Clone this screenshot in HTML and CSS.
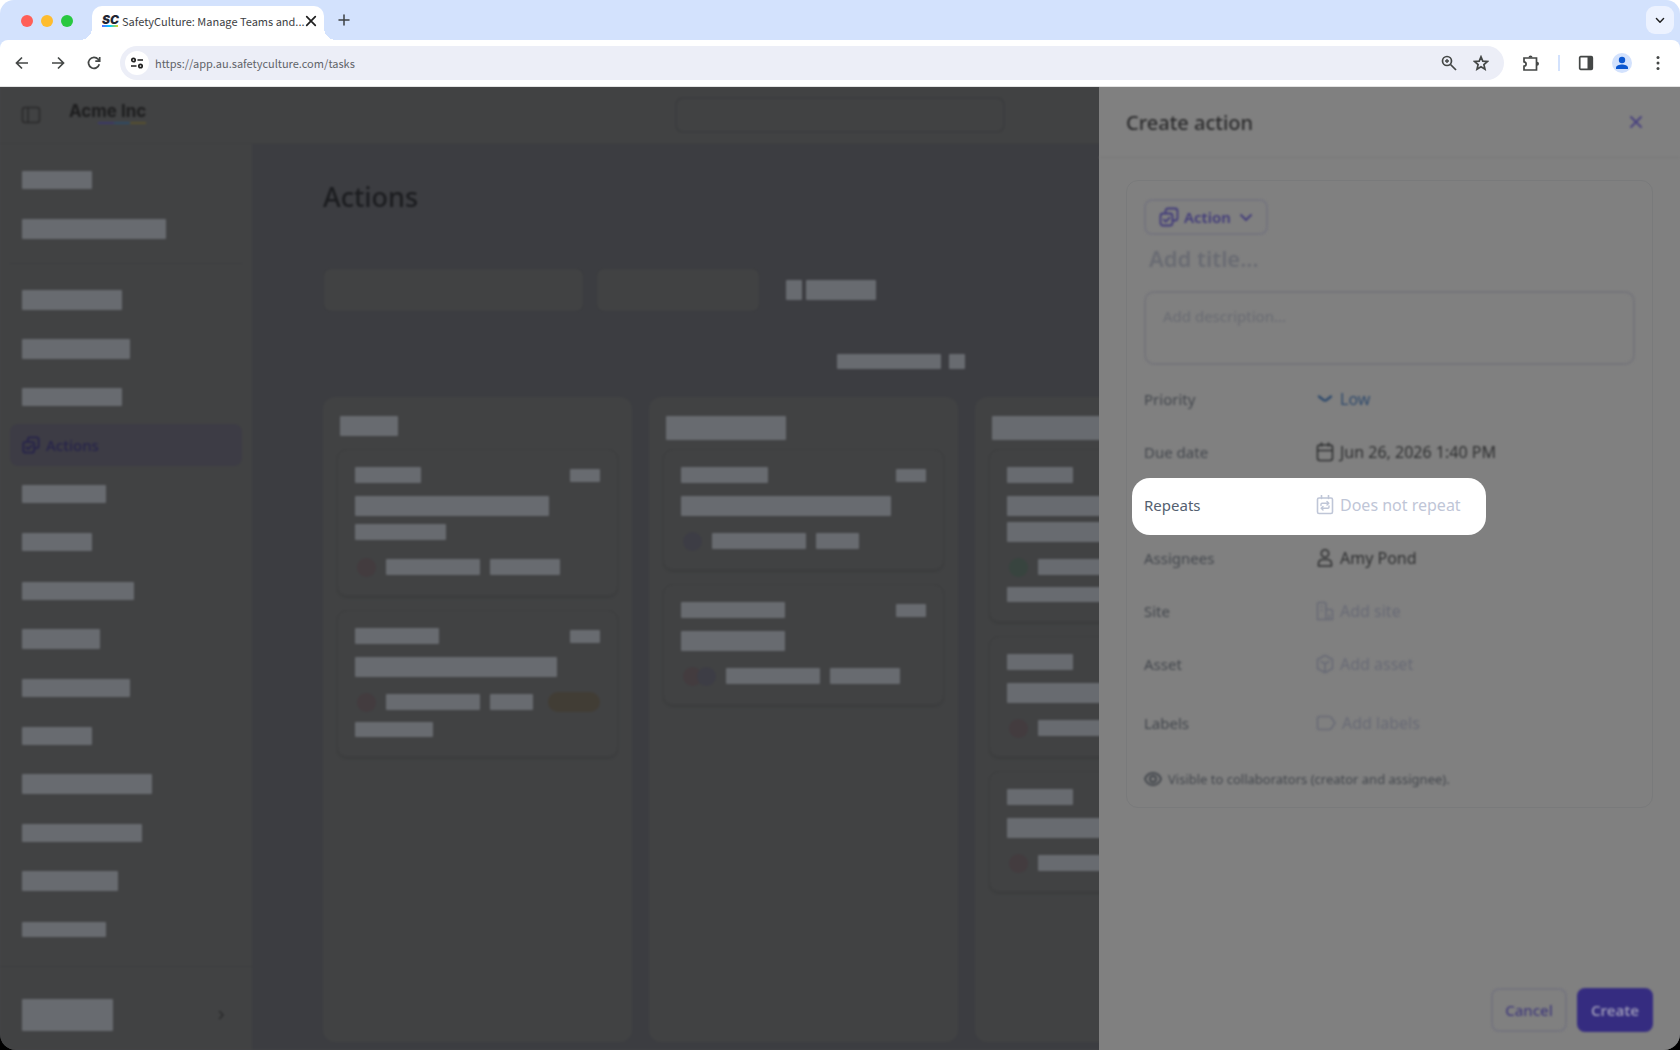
FILE: index.html
```html
<!DOCTYPE html>
<html lang="en">
<head>
    <meta charset="UTF-8">
    <meta name="viewport" content="width=device-width, initial-scale=1.0">
    <title>SafetyCulture: Manage Teams and...</title>
    <link rel="stylesheet" href="styles.css">
</head>
<body>

<svg class="sprite" aria-hidden="true">
    <symbol id="icon-action" viewBox="0 0 20 20">
        <path d="M6.500 6V4a2.500 2.500 0 0 1 2.500-2.500h7A2.500 2.500 0 0 1 18.500 4v7a2.500 2.500 0 0 1-2.500 2.500h-2"/>
        <rect x="1.500" y="6.500" width="12" height="12" rx="2.500"/>
        <path d="M4.800 12.600l2 2 3.800-4"/>
    </symbol>
    <symbol id="icon-close" viewBox="0 0 14 14">
        <path d="M2 2l10 10M12 2L2 12"/>
    </symbol>
    <symbol id="icon-chevron" viewBox="0 0 14 14">
        <path d="M2 5l5 5 5-5"/>
    </symbol>
</svg>

<header class="browser">
    <div class="tab-strip">
        <div class="lights">
            <span class="light red"></span>
            <span class="light yellow"></span>
            <span class="light lime"></span>
        </div>
        <div class="tab">
            <span class="favicon">SC</span>
            <span class="tab-title">SafetyCulture: Manage Teams and...</span>
            <button class="icon-btn tab-close" aria-label="Close tab">
                <svg width="12" height="12"><use href="#icon-close"/></svg>
            </button>
        </div>
        <button class="icon-btn new-tab" aria-label="New tab">
            <svg width="12" height="12" viewBox="0 0 12 12"><path d="M6 1v10M1 6h10"/></svg>
        </button>
        <button class="icon-btn tab-search" aria-label="Search tabs">
            <svg width="10" height="10"><use href="#icon-chevron"/></svg>
        </button>
    </div>

    <div class="toolbar">
        <div class="history">
            <button class="icon-btn" aria-label="Back">
                <svg width="16" height="16" viewBox="0 0 16 16"><path d="M14 8H3M8 2.500L2.500 8 8 13.500"/></svg>
            </button>
            <button class="icon-btn" aria-label="Forward">
                <svg width="16" height="16" viewBox="0 0 16 16"><path d="M2 8h11M8 2.500L13.500 8 8 13.500"/></svg>
            </button>
            <button class="icon-btn" aria-label="Reload">
                <svg width="16" height="16" viewBox="0 0 16 16"><path d="M13.300 9.300A5.500 5.500 0 1 1 12.200 4.300L13.500 6M13.700 2v4.200H9.300"/></svg>
            </button>
        </div>
        <div class="address">
            <button class="icon-btn site-info" aria-label="Site information">
                <svg width="14" height="14" viewBox="0 0 14 14"><circle cx="3.500" cy="4" r="1.700"/><path d="M7.500 4H13M1 10h5.500"/><circle cx="10.500" cy="10" r="1.700"/></svg>
            </button>
            <input class="url" type="text" aria-label="Address" value="https://app.au.safetyculture.com/tasks">
            <button class="icon-btn" aria-label="Zoom">
                <svg width="16" height="16" viewBox="0 0 16 16"><circle cx="6" cy="6" r="4.500"/><path d="M9.500 9.500L15 15"/><path class="thin" d="M6 4v4M4 6h4"/></svg>
            </button>
            <button class="icon-btn" aria-label="Bookmark">
                <svg width="16" height="16" viewBox="0 0 16 16"><path d="M8 1.800l1.800 4.300 4.700.4-3.600 3.100 1.100 4.600L8 11.800l-4 2.400 1.100-4.600L1.500 6.500l4.700-.4z"/></svg>
            </button>
        </div>
        <button class="icon-btn" aria-label="Extensions">
            <svg width="18" height="18" viewBox="0 0 18 18"><path d="M2 4h12.500v12H2v-3.800c2.800-.3 2.800-4.100 0-4.400z"/><path class="fill" d="M6.500 3.500a2 2 0 0 1 4 0zM15 7.800a2 2 0 0 1 0 4z"/></svg>
        </button>
        <span class="toolbar-divider"></span>
        <button class="icon-btn" aria-label="Side panel">
            <svg width="16" height="16" viewBox="0 0 16 16"><rect x="1.700" y="1.700" width="12.600" height="12.600" rx="1"/><path class="fill" d="M9.500 2h5v12h-5z"/></svg>
        </button>
        <button class="icon-btn profile" aria-label="Profile">
            <svg width="14" height="14" viewBox="0 0 14 14"><circle cx="7" cy="4" r="3.200"/><path d="M1 13v-1.500C1 9.500 4.500 8.400 7 8.400s6 1.100 6 3.100V13z"/></svg>
        </button>
        <button class="icon-btn" aria-label="Menu">
            <svg width="16" height="16" viewBox="0 0 16 16"><g class="fill"><circle cx="8" cy="2.500" r="1.500"/><circle cx="8" cy="8" r="1.500"/><circle cx="8" cy="13.500" r="1.500"/></g></svg>
        </button>
    </div>
</header>

<div class="app">
    <div class="workspace">
        <header class="topbar">
            <div class="brand">
                <button class="icon-btn" aria-label="Toggle sidebar">
                    <svg width="20" height="18" viewBox="0 0 20 18"><rect x="1.500" y="1.500" width="17" height="15" rx="2.500"/><path d="M7 2v14"/></svg>
                </button>
                <span class="logo">Acme Inc</span>
            </div>
            <input class="search" type="search" aria-label="Search">
        </header>

        <nav class="sidebar">
            <ul class="menu-top">
                <li><span class="bar w70 h18"></span></li>
                <li><span class="bar w144 h20"></span></li>
            </ul>
            <ul class="menu">
                <li><span class="bar w100 h20"></span></li>
                <li><span class="bar w108 h20"></span></li>
                <li><span class="bar w100 h18"></span></li>
                <li><a class="current" href="#"><svg width="18" height="18"><use href="#icon-action"/></svg>Actions</a></li>
                <li><span class="bar w84 h18"></span></li>
                <li><span class="bar w70 h18"></span></li>
                <li><span class="bar w112 h18"></span></li>
                <li><span class="bar w78 h20"></span></li>
                <li><span class="bar w108 h18"></span></li>
                <li><span class="bar w70 h18"></span></li>
                <li><span class="bar w130 h20"></span></li>
                <li><span class="bar w120 h18"></span></li>
                <li><span class="bar w96 h20"></span></li>
                <li><span class="bar w84 h15"></span></li>
            </ul>
            <div class="account">
                <span class="bar w91 h32"></span>
                <svg class="turn" width="10" height="10"><use href="#icon-chevron"/></svg>
            </div>
        </nav>

        <main class="content">
            <h1>Actions</h1>
            <div class="filters">
                <input class="filter wide" type="text" aria-label="Search actions">
                <input class="filter" type="text" aria-label="Filter">
                <span class="bar w16 h20"></span>
                <span class="bar w70 h20"></span>
            </div>
            <div class="sorting">
                <span class="bar w104 h15"></span>
                <span class="bar w16 h15"></span>
            </div>

            <div class="board">
                <section class="column">
                    <div class="column-head"><span class="bar w58 h20"></span></div>
                    <article class="card">
                        <div class="card-top"><span class="bar w66 h16"></span><span class="bar w30 h13"></span></div>
                        <div class="line"><span class="bar w194 h20"></span></div>
                        <div class="line"><span class="bar w91 h16"></span></div>
                        <div class="meta"><span class="dot rose"></span><span class="bar w94 h16"></span><span class="bar w70 h16"></span></div>
                    </article>
                    <article class="card">
                        <div class="card-top"><span class="bar w84 h16"></span><span class="bar w30 h13"></span></div>
                        <div class="line"><span class="bar w202 h20"></span></div>
                        <div class="meta"><span class="dot rose"></span><span class="bar w94 h16"></span><span class="bar w43 h16"></span><span class="pill"></span></div>
                        <div class="extra"><span class="bar w78 h15"></span></div>
                    </article>
                </section>

                <section class="column">
                    <div class="column-head"><span class="bar w120 h24"></span></div>
                    <article class="card">
                        <div class="card-top"><span class="bar w87 h16"></span><span class="bar w30 h13"></span></div>
                        <div class="line"><span class="bar w210 h20"></span></div>
                        <div class="meta"><span class="dot indigo"></span><span class="bar w94 h16"></span><span class="bar w43 h16"></span></div>
                    </article>
                    <article class="card">
                        <div class="card-top"><span class="bar w104 h16"></span><span class="bar w30 h13"></span></div>
                        <div class="line"><span class="bar w104 h20"></span></div>
                        <div class="meta"><span class="dot rose"></span><span class="dot indigo second"></span><span class="bar w94 h16"></span><span class="bar w70 h16"></span></div>
                    </article>
                </section>

                <section class="column">
                    <div class="column-head"><span class="bar w144 h24"></span></div>
                    <article class="card">
                        <div class="card-top"><span class="bar w66 h16"></span><span class="bar w30 h13"></span></div>
                        <div class="line"><span class="bar w194 h20"></span></div>
                        <div class="line"><span class="bar w194 h20"></span></div>
                        <div class="meta"><span class="dot green"></span><span class="bar w94 h16"></span><span class="bar w70 h16"></span></div>
                        <div class="extra"><span class="bar w144 h15"></span></div>
                    </article>
                    <article class="card">
                        <div class="card-top"><span class="bar w66 h16"></span><span class="bar w30 h13"></span></div>
                        <div class="line"><span class="bar w194 h20"></span></div>
                        <div class="meta"><span class="dot rose"></span><span class="bar w94 h16"></span><span class="bar w70 h16"></span></div>
                    </article>
                    <article class="card">
                        <div class="card-top"><span class="bar w66 h16"></span><span class="bar w30 h13"></span></div>
                        <div class="line"><span class="bar w194 h20"></span></div>
                        <div class="meta"><span class="dot rose"></span><span class="bar w94 h16"></span><span class="bar w70 h16"></span></div>
                    </article>
                </section>
            </div>
        </main>
    </div>

    <aside class="drawer">
        <div class="drawer-head">
            <h2>Create action</h2>
            <button class="icon-btn close" aria-label="Close">
                <svg width="14" height="14"><use href="#icon-close"/></svg>
            </button>
        </div>

        <form class="form">
            <button type="button" class="btn type-btn">
                <svg width="20" height="20"><use href="#icon-action"/></svg>
                Action
                <svg class="type-arrow" width="14" height="14"><use href="#icon-chevron"/></svg>
            </button>
            <input class="title-input" type="text" aria-label="Title" placeholder="Add title...">
            <textarea class="description" aria-label="Description" placeholder="Add description..."></textarea>

            <div class="row">
                <label for="priority">Priority</label>
                <button type="button" id="priority" class="value low">
                    <svg width="18" height="20" viewBox="0 0 18 20"><path class="bold" d="M3 7.500l4.500 3.500q1.500 1 3 0L15 7.500"/></svg>
                    Low
                </button>
            </div>
            <div class="row">
                <label for="due">Due date</label>
                <button type="button" id="due" class="value filled">
                    <svg width="18" height="20" viewBox="0 0 18 20"><rect x="1.500" y="3" width="15" height="15.500" rx="2.500"/><path d="M2 8.500h14M5.500 1v3M12.500 1v3"/></svg>
                    Jun 26, 2026 1:40 PM
                </button>
            </div>
            <div class="row spotlight">
                <label for="repeats">Repeats</label>
                <button type="button" id="repeats" class="value">
                    <svg width="18" height="20" viewBox="0 0 18 20"><rect x="1.500" y="3" width="15" height="15.500" rx="1.500"/><path d="M5.500 .5v3M12.500 .5v3"/><path class="thin" d="M5 10.500V9.300a1 1 0 0 1 1-1h6.500M11 6.500l1.800 1.800L11 10.100M13 11v1.200a1 1 0 0 1-1 1H5.500M7 11.400l-1.800 1.800L7 15"/></svg>
                    Does not repeat
                </button>
            </div>
            <div class="row">
                <label for="assignees">Assignees</label>
                <button type="button" id="assignees" class="value filled">
                    <svg width="18" height="20" viewBox="0 0 18 20"><circle cx="9" cy="5.500" r="3.700"/><path d="M6.500 11.500h5a4.500 4.500 0 0 1 4 4.500v2h-13v-2a4.500 4.500 0 0 1 4-4.500z"/></svg>
                    Amy Pond
                </button>
            </div>
            <div class="row">
                <label for="site">Site</label>
                <button type="button" id="site" class="value">
                    <svg width="18" height="20" viewBox="0 0 18 20"><path d="M10 18.500H1.500V3a1.500 1.500 0 0 1 1.500-1.500h5.500A1.500 1.500 0 0 1 10 3zM10 8.500h5A1.500 1.500 0 0 1 16.500 10v8.500H10M13.200 14v4"/><path class="thin" d="M5.700 5v1M5.700 9v1"/></svg>
                    Add site
                </button>
            </div>
            <div class="row">
                <label for="asset">Asset</label>
                <button type="button" id="asset" class="value">
                    <svg width="18" height="20" viewBox="0 0 18 20"><path d="M9 1.200l7.500 4.300v9L9 18.800 1.500 14.500v-9zM5 7.500l4 2.300 4-2.300M9 10v8.500"/></svg>
                    Add asset
                </button>
            </div>
            <div class="row tall">
                <label for="labels">Labels</label>
                <button type="button" id="labels" class="value">
                    <svg width="20" height="20" viewBox="0 0 20 20"><path d="M3.500 3.500h9.500a3 3 0 0 1 2.400 1.200L19 10l-3.600 5.300a3 3 0 0 1-2.400 1.200H3.500a2 2 0 0 1-2-2v-9a2 2 0 0 1 2-2z"/></svg>
                    Add labels
                </button>
            </div>
            <p class="visibility">
                <svg width="18" height="18" viewBox="0 0 18 18"><path d="M1 9c1.500-4 4.500-6 8-6s6.500 2 8 6c-1.500 4-4.500 6-8 6s-6.500-2-8-6z"/><circle cx="9" cy="9" r="3"/></svg>
                Visible to collaborators (creator and assignee).
            </p>
        </form>

        <div class="drawer-foot">
            <button class="btn cancel">Cancel</button>
            <button class="btn create">Create</button>
        </div>
    </aside>
</div>

</body>
</html>
```
FILE: styles.css
```css
* {
    box-sizing: border-box;
}
body {
    margin: 0;
    height: 100vh;
    display: flex;
    flex-direction: column;
    background: linear-gradient(#fff 50%, #000 50%); /* shows behind the rounded window corners */
    font-family: "Noto Sans", sans-serif;
    font-size: 16px;
    overflow: hidden;
}
button, input, textarea {
    font: inherit;
    color: inherit;
    margin: 0;
}
ul {
    list-style: none;
    margin: 0;
    padding: 0;
}
svg {
    display: block;
    flex: none;
    fill: none;
    stroke: currentColor;
    stroke-width: 2;
    stroke-linecap: round;
    stroke-linejoin: round;
}
svg .thin {
    stroke-width: 1.4;
}
svg .bold {
    stroke-width: 2.4;
}
svg .fill {
    fill: currentColor;
    stroke: none;
}
.sprite {
    position: absolute;
    width: 0;
    height: 0;
}
.icon-btn {
    display: flex;
    align-items: center;
    justify-content: center;
    flex: none;
    padding: 0;
    border: none;
    background: none;
    cursor: pointer;
}

/* Browser window */
.browser {
    flex: none;
    background: #d3e2fd;
    border-radius: 14px 14px 0 0;
    font-family: "Noto Sans CJK SC", sans-serif;
    font-size: 11px;
    color: #3c4043;
}
.tab-strip {
    display: flex;
    align-items: flex-start;
    height: 40px;
    padding: 6px 6px 0 21px;
}
.lights {
    display: flex;
    gap: 8px;
    margin: 9px 19px 0 0;
}
.light {
    width: 12px;
    height: 12px;
    border-radius: 50%;
}
.red { background: #ff5f57; }
.yellow { background: #febc2e; }
.lime { background: #28c840; }
.tab {
    position: relative;
    display: flex;
    align-items: center;
    width: 232px;
    height: 34px;
    padding: 0 10px 5px;
    background: #fff;
    border-radius: 10px 10px 0 0;
}
/* curved feet of the active tab */
.tab::before,
.tab::after {
    content: "";
    position: absolute;
    bottom: 0;
    width: 12px;
    height: 12px;
}
.tab::before {
    right: 100%;
    background: radial-gradient(circle at 0 0, transparent 12px, #fff 12px);
}
.tab::after {
    left: 100%;
    background: radial-gradient(circle at 100% 0, transparent 12px, #fff 12px);
}
.favicon {
    width: 16px;
    margin-right: 4px;
    border-bottom: 2px solid;
    border-image: linear-gradient(90deg, #6559ff, #00d1ff, #ffd500) 1;
    font: italic 900 12px/11px Inter, sans-serif;
    color: #1f2533;
}
.tab-title {
    flex: 1;
    white-space: nowrap;
}
.tab-close {
    color: #1f1f1f;
}
.new-tab {
    width: 24px;
    height: 28px;
    margin-left: 8px;
}
.new-tab svg {
    stroke-width: 1.5;
}
.tab-search {
    width: 28px;
    height: 28px;
    margin-left: auto;
    border-radius: 9px;
    background: #ecf2ff;
    color: #1f1f1f;
}
.toolbar {
    display: flex;
    align-items: center;
    gap: 18px;
    height: 47px;
    padding: 0 14px;
    background: #fff;
    border-radius: 8px 8px 0 0;
    border-bottom: 1px solid #e3e3e3;
    color: #444746;
}
.toolbar svg {
    stroke-width: 1.7;
    stroke-linecap: butt;
    stroke-linejoin: miter;
}
.history {
    display: flex;
    gap: 20px;
}
.address {
    display: flex;
    align-items: center;
    flex: 1;
    gap: 16px;
    height: 34px;
    padding: 0 15px 0 5px;
    border-radius: 17px;
    background: #eceef7;
}
.site-info {
    width: 24px;
    height: 24px;
    border-radius: 50%;
    background: #fff;
    color: #1f1f1f;
}
.url {
    flex: 1;
    min-width: 0;
    margin-left: -10px;
    padding: 0;
    border: none;
    outline: none;
    background: none;
    color: #5f6368;
}
.toolbar-divider {
    width: 2px;
    height: 16px;
    background: #d3e2fd;
}
.profile {
    width: 20px;
    height: 20px;
    border-radius: 50%;
    background: #d3e2fd;
    color: #0b57d0;
}
.profile svg {
    fill: currentColor;
    stroke: none;
}

/* Dimmed application */
.app {
    position: relative;
    flex: 1;
    min-height: 0;
    display: flex;
    overflow: hidden;
    border-radius: 0 0 16px 16px;
    background: #464748;
}
.workspace {
    flex: 1;
    min-width: 0;
    display: grid;
    grid-template: 57px 1fr / 252px 1fr;
    overflow: hidden;
    background: #414243;
    filter: blur(1px);
}
.bar {
    flex: none;
    border-radius: 1px;
    background: #686b70;
}
.topbar {
    grid-column: 1 / 3;
    display: grid;
    grid-template-columns: 1fr 330px 1fr;
    align-items: center;
    border-bottom: 1px solid #3d3e40;
}
.brand {
    display: flex;
    gap: 28px;
    align-items: center;
    padding-left: 21px;
    color: #2a2a2b;
}
.brand svg {
    stroke-width: 1.5;
}
.logo {
    padding-bottom: 8px;
    background: linear-gradient(90deg, #3b3869 33%, #2f4a66 33% 66%, #57502f 66%) 100% 22px / 48px 2px no-repeat;
    font: 700 17px/22px Inter, sans-serif;
    color: #1d1d1e;
}
.search {
    height: 36px;
    border: 2px solid #3c3d3f;
    border-radius: 8px;
    background: none;
}
.sidebar {
    display: flex;
    flex-direction: column;
    min-height: 0;
}
.sidebar li {
    display: flex;
    align-items: center;
    padding-left: 12px;
}
.menu-top {
    margin: 0 10px;
    padding: 11px 0 10px;
    border-bottom: 1px solid #3c3d3f;
}
.menu-top li {
    height: 49px;
}
.menu {
    flex: 1;
    display: flex;
    flex-direction: column;
    padding: 12px 10px;
}
.menu li {
    flex: 1;
}
.current {
    display: flex;
    align-items: center;
    gap: 6px;
    flex: 1;
    height: 42px;
    margin-left: -12px;
    padding-left: 12px;
    border-radius: 8px;
    background: #3d3c45;
    color: #26234a;
    font-size: 15px;
    font-weight: 500;
    text-decoration: none;
}
.account {
    display: flex;
    align-items: center;
    justify-content: space-between;
    height: 84px;
    padding: 12px 26px 0 22px;
    border-top: 1px solid #3c3d3f;
    color: #28292a;
}
.turn {
    transform: rotate(-90deg);
}
.content {
    display: flex;
    flex-direction: column;
    min-width: 0;
    padding: 33px 0 8px 71px;
    background: #3c3d41;
}
h1 {
    margin: 0;
    font-size: 27px;
    line-height: 40px;
    font-weight: 500;
    color: #1b1c1f;
}
.filters {
    display: flex;
    align-items: center;
    gap: 4px;
    margin-top: 51px;
}
.filter {
    width: 164px;
    height: 44px;
    margin-right: 22px;
    border: 1px solid #3a3b3f;
    border-radius: 8px;
    background: #414243;
}
.wide {
    width: 261px;
    margin-right: 8px;
}
.sorting {
    display: flex;
    gap: 8px;
    margin: 42px 0 28px 514px;
}
.board {
    flex: 1;
    display: flex;
    gap: 17px;
    overflow: hidden;
}
.column {
    flex: none;
    display: flex;
    flex-direction: column;
    gap: 14px;
    width: 309px;
    padding: 0 14px;
    border-radius: 12px;
    background: #414243;
}
.column-head {
    display: flex;
    align-items: flex-start;
    height: 38px;
    padding: 19px 3px 0;
}
.card {
    padding: 16px 17px 19px;
    border: 1px solid #3d3e3f;
    border-radius: 10px;
    box-shadow: 0 2px 2px #3c3d3e;
}
.card-top {
    display: flex;
    align-items: center;
    justify-content: space-between;
    height: 18px;
    margin-bottom: 9px;
}
.line {
    display: flex;
    align-items: center;
    height: 26px;
}
.meta {
    display: flex;
    align-items: center;
    gap: 10px;
    height: 18px;
    margin-top: 13px;
    padding-left: 2px;
}
.dot {
    width: 19px;
    height: 19px;
    border-radius: 50%;
}
.rose { background: #433c3f; }
.indigo { background: #3d3d45; }
.green { background: #38443f; }
.second {
    margin-left: -15px;
}
.pill {
    width: 52px;
    height: 20px;
    margin-left: auto;
    border-radius: 10px;
    background: #413d35;
}
.extra {
    display: flex;
    margin-top: 11px;
}

/* placeholder sizes */
.w16 { width: 16px; }
.w30 { width: 30px; }
.w43 { width: 43px; }
.w58 { width: 58px; }
.w66 { width: 66px; }
.w70 { width: 70px; }
.w78 { width: 78px; }
.w84 { width: 84px; }
.w87 { width: 87px; }
.w91 { width: 91px; }
.w94 { width: 94px; }
.w96 { width: 96px; }
.w100 { width: 100px; }
.w104 { width: 104px; }
.w108 { width: 108px; }
.w112 { width: 112px; }
.w120 { width: 120px; }
.w130 { width: 130px; }
.w144 { width: 144px; }
.w194 { width: 194px; }
.w202 { width: 202px; }
.w210 { width: 210px; }
.h13 { height: 13px; }
.h15 { height: 15px; }
.h16 { height: 16px; }
.h18 { height: 18px; }
.h20 { height: 20px; }
.h24 { height: 24px; }
.h32 { height: 32px; }

/* Drawer */
.drawer {
    position: absolute;
    top: 0;
    right: 0;
    bottom: 0;
    display: flex;
    flex-direction: column;
    width: 581px;
    max-width: 100%;
    background: #808080;
    color: #43474d;
    font-size: 15px;
}
.drawer-head {
    display: flex;
    align-items: center;
    justify-content: space-between;
    height: 71px;
    padding: 0 37px 0 27px;
    border-bottom: 1px solid #797979;
    filter: blur(1px);
}
h2 {
    margin: 0;
    font-size: 20px;
    font-weight: 500;
    color: #2b2b2c;
}
.close {
    color: #49427f;
}
.form {
    margin: 22px 27px 0;
    padding: 18px 17px 3px;
    border: 1px solid #797a7b;
    border-radius: 12px;
}
.btn {
    border: 2px solid #75757e;
    border-radius: 8px;
    background: none;
    color: #413b7a;
    cursor: pointer;
    filter: blur(1px);
}
.type-btn {
    display: flex;
    align-items: center;
    gap: 5px;
    height: 36px;
    padding: 0 13px;
    font-weight: 600;
}
.type-btn svg {
    stroke-width: 1.8;
}
.type-arrow {
    margin-left: 3px;
}
.title-input {
    display: block;
    width: 100%;
    height: 34px;
    margin-top: 8px;
    padding: 0 5px 4px;
    border: none;
    background: none;
    font-size: 22px;
    font-weight: 600;
    filter: blur(1px);
}
::placeholder {
    color: #696b72;
    opacity: 1;
}
.description {
    display: block;
    width: 100%;
    height: 74px;
    margin: 14px 0 9px;
    padding: 13px 17px;
    border: 2px solid #75757a;
    border-radius: 10px;
    background: none;
    resize: none;
    filter: blur(1px);
}
.row {
    display: grid;
    grid-template-columns: 172px 1fr;
    align-items: center;
    height: 53px;
    padding-bottom: 4px;
    filter: blur(1px);
}
.tall {
    height: 66px;
}
.value {
    display: flex;
    align-items: center;
    gap: 6px;
    padding: 0;
    border: none;
    background: none;
    color: #686a75;
    font-size: 16px;
    cursor: pointer;
}
.value svg {
    stroke-width: 1.6;
}
.low {
    color: #2f4a6c;
}
.filled {
    color: #2e2f30;
}
/* the only field left sharp and undimmed */
.spotlight {
    position: relative;
    width: 354px;
    height: 57px;
    margin: -2px 0 -2px -12px;
    padding-left: 12px;
    border-radius: 18px;
    background: #fff;
    color: #545f70;
    filter: none;
}
.spotlight .value {
    color: #bfc6d7;
}
.visibility {
    display: flex;
    align-items: center;
    gap: 6px;
    height: 46px;
    margin: 0;
    padding-bottom: 4px;
    font-size: 13px;
    filter: blur(1px);
}
.drawer-foot {
    display: flex;
    justify-content: flex-end;
    gap: 10px;
    margin-top: auto;
    padding: 0 27px 18px;
}
.cancel,
.create {
    width: 76px;
    height: 44px;
    padding: 0;
    font-weight: 500;
}
.create {
    border-color: #352c80;
    background: #352c80;
    color: #9996b5;
    font-weight: 600;
}
```
